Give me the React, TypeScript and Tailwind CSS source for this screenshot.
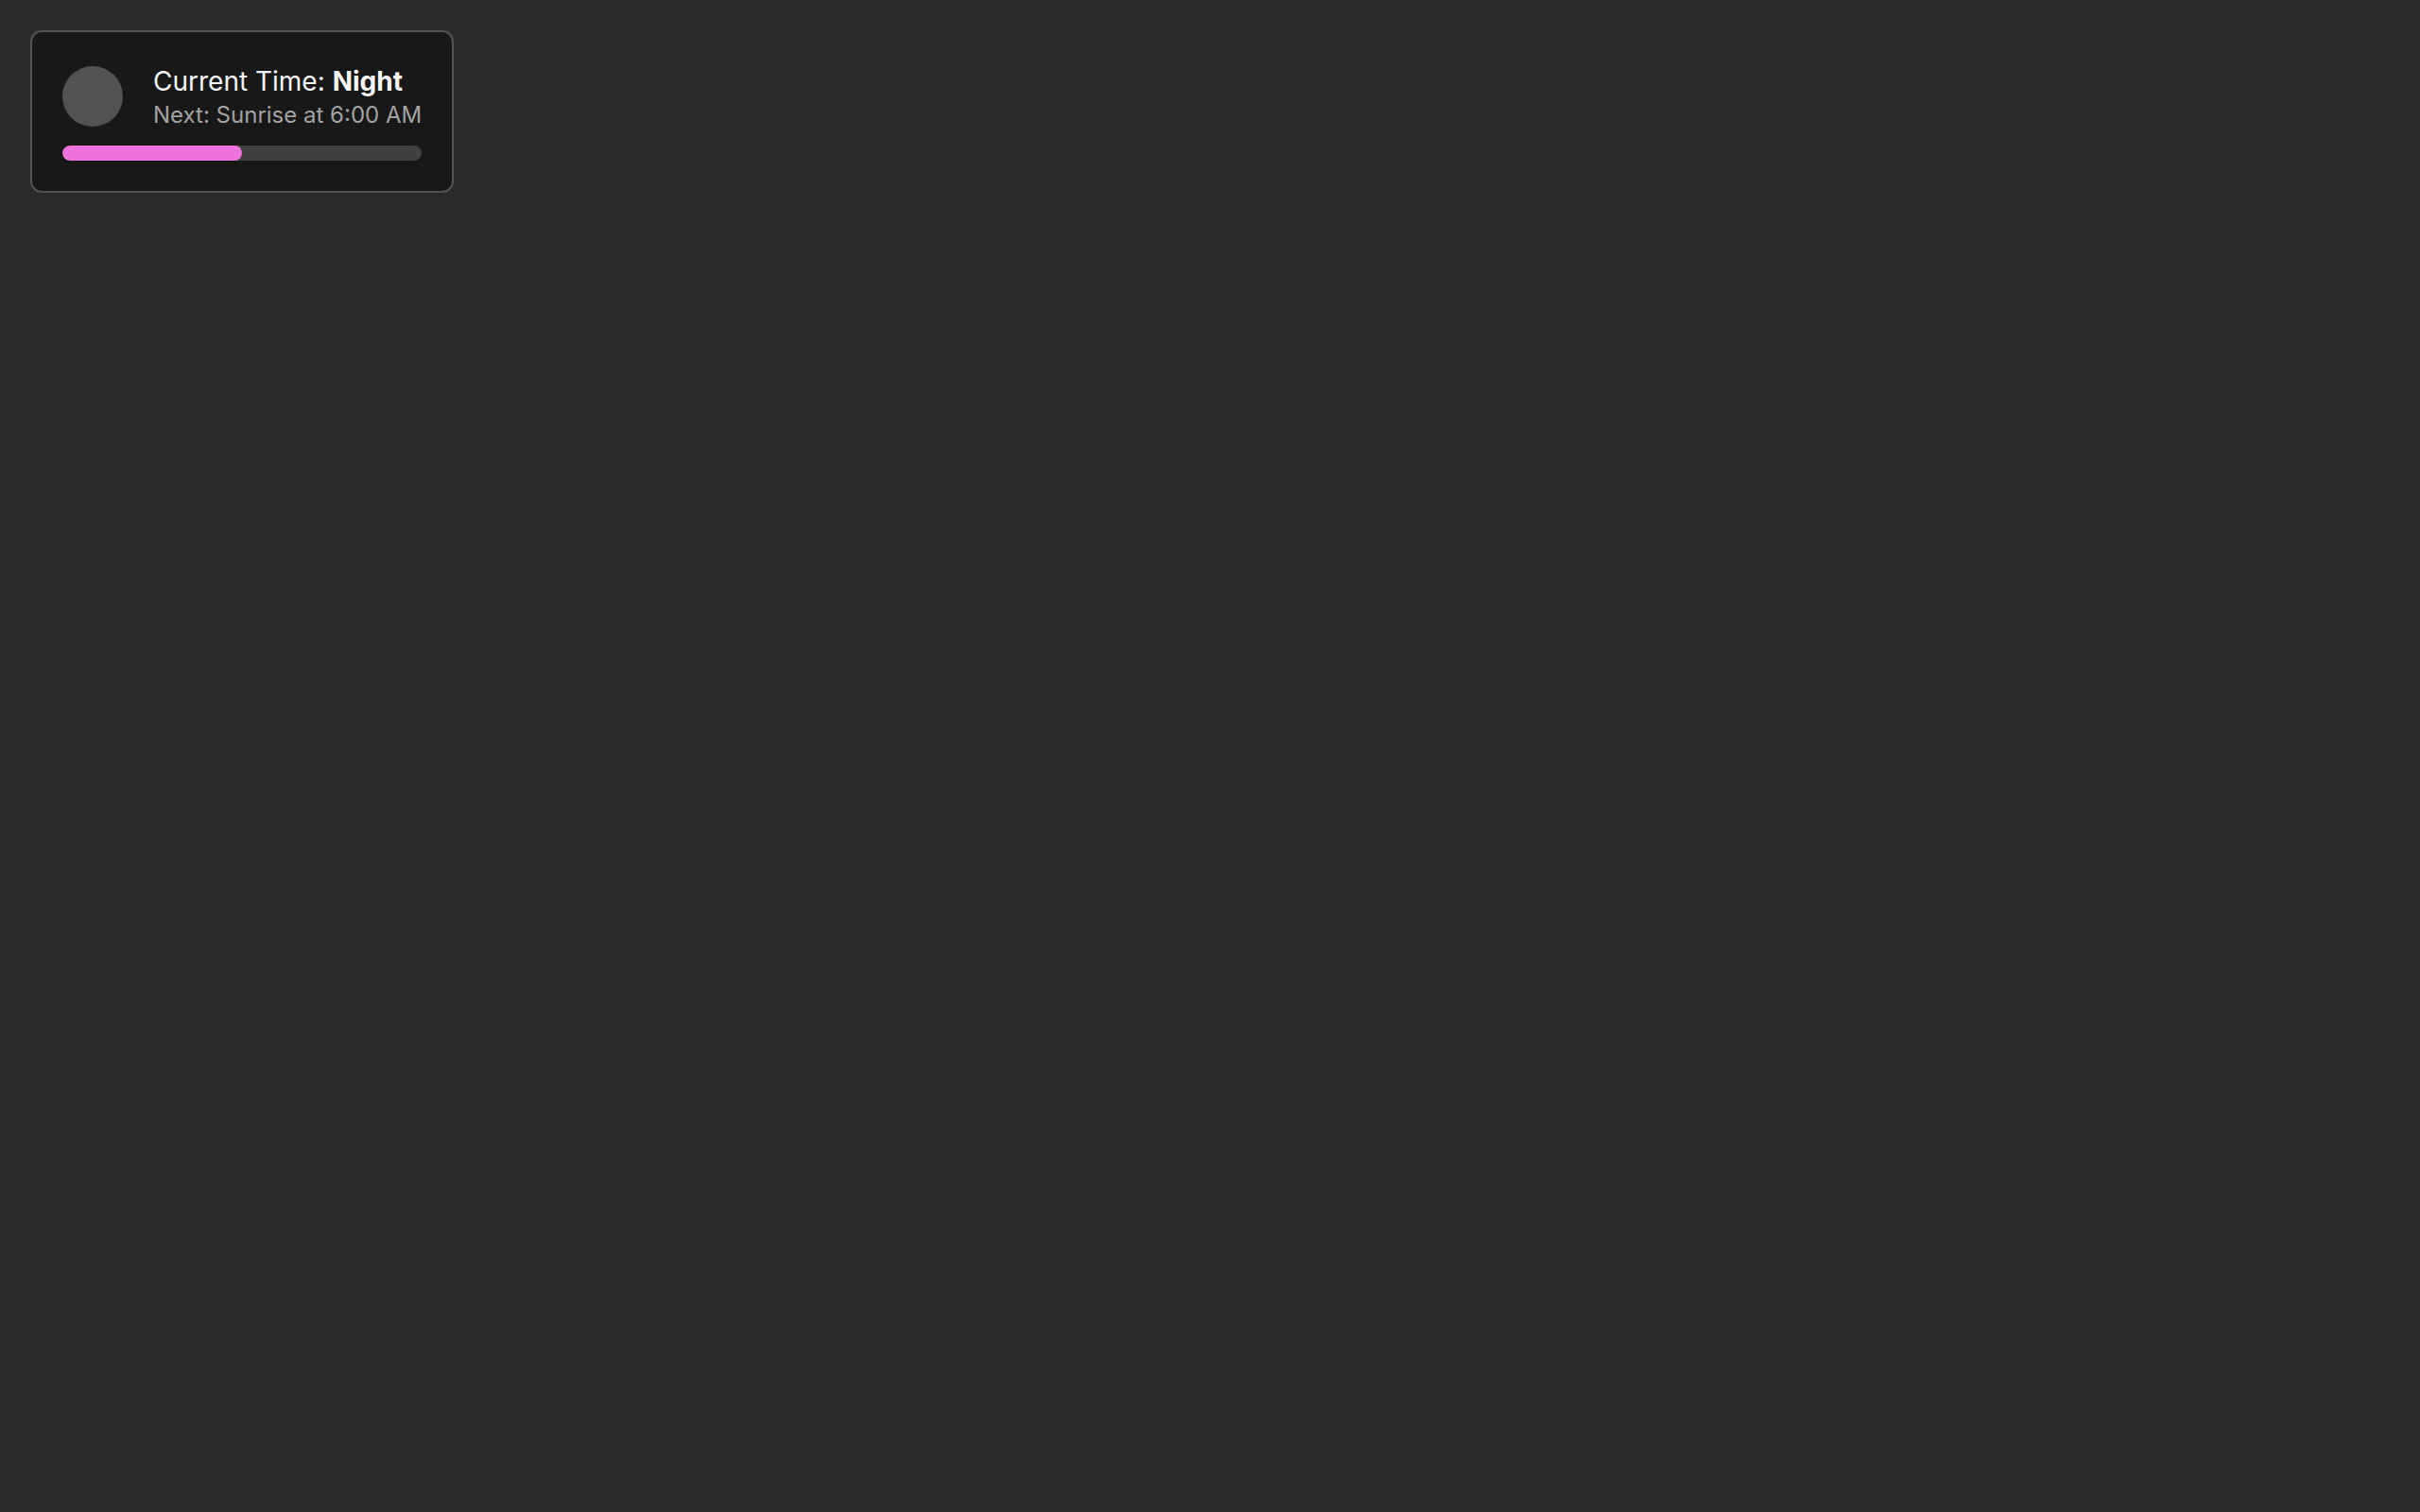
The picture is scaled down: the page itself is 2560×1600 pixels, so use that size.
import React from 'react';

type Props = {
  period: string;
  nextEvent: string;
  progress: number;
};

function TimeCard({ period, nextEvent, progress }: Props) {
  return (
    <section className="w-fit rounded-xl border-2 border-[#525252] bg-[#181818] p-8">
      <div className="flex items-center gap-8">
        <div className="size-16 shrink-0 rounded-full bg-[#525252]" />
        <div>
          <p className="text-[28px] leading-10 text-[#f5f5f5]">
            Current Time: <strong className="font-bold">{period}</strong>
          </p>
          <p className="text-2xl leading-8 text-[#a3a3a3]">{nextEvent}</p>
        </div>
      </div>
      <div
        role="progressbar"
        aria-label="Time until next event"
        aria-valuenow={progress}
        aria-valuemin={0}
        aria-valuemax={100}
        className="mt-4 h-4 overflow-hidden rounded-lg bg-[#404040]"
      >
        <div
          className="h-full rounded-lg bg-[#ed74dc]"
          style={{ width: `${progress}%` }}
        />
      </div>
    </section>
  );
}

export default function App() {
  return (
    <main className="min-h-screen bg-[#2b2b2b] p-8 font-['Inter',sans-serif]">
      <TimeCard
        period="Night"
        nextEvent="Next: Sunrise at 6:00 AM"
        progress={50}
      />
    </main>
  );
}
